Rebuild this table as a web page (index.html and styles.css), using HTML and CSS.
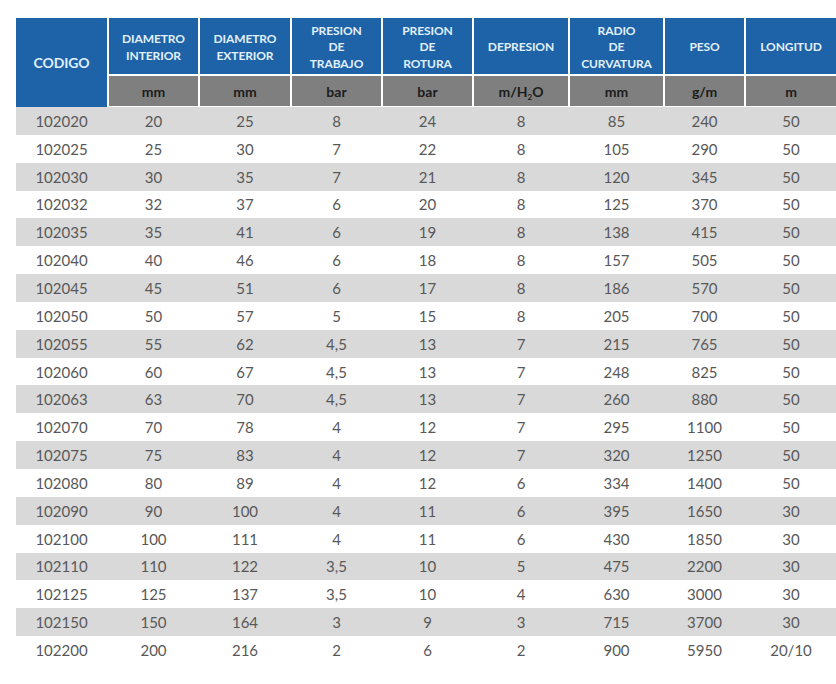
FILE: index.html
```html
<!DOCTYPE html>
<html lang="es">
<head>
<meta charset="utf-8">
<title>Tabla</title>
<link rel="stylesheet" href="styles.css">
</head>
<body>
<table class="spec">
  <colgroup>
    <col class="c1"><col class="c2"><col class="c3"><col class="c4"><col class="c5"><col class="c6"><col class="c7"><col class="c8"><col class="c9">
  </colgroup>
  <thead>
    <tr class="titles">
      <th rowspan="2" class="codigo">CODIGO</th>
      <th>DIAMETRO<br>INTERIOR</th>
      <th>DIAMETRO<br>EXTERIOR</th>
      <th>PRESION<br>DE<br>TRABAJO</th>
      <th>PRESION<br>DE<br>ROTURA</th>
      <th>DEPRESION</th>
      <th>RADIO<br>DE<br>CURVATURA</th>
      <th>PESO</th>
      <th>LONGITUD</th>
    </tr>
    <tr class="units">
      <th>mm</th><th>mm</th><th>bar</th><th>bar</th><th>m/H<sub>2</sub>O</th><th>mm</th><th>g/m</th><th>m</th>
    </tr>
  </thead>
  <tbody>
    <tr><td>102020</td><td>20</td><td>25</td><td>8</td><td>24</td><td>8</td><td>85</td><td>240</td><td>50</td></tr>
    <tr><td>102025</td><td>25</td><td>30</td><td>7</td><td>22</td><td>8</td><td>105</td><td>290</td><td>50</td></tr>
    <tr><td>102030</td><td>30</td><td>35</td><td>7</td><td>21</td><td>8</td><td>120</td><td>345</td><td>50</td></tr>
    <tr><td>102032</td><td>32</td><td>37</td><td>6</td><td>20</td><td>8</td><td>125</td><td>370</td><td>50</td></tr>
    <tr><td>102035</td><td>35</td><td>41</td><td>6</td><td>19</td><td>8</td><td>138</td><td>415</td><td>50</td></tr>
    <tr><td>102040</td><td>40</td><td>46</td><td>6</td><td>18</td><td>8</td><td>157</td><td>505</td><td>50</td></tr>
    <tr><td>102045</td><td>45</td><td>51</td><td>6</td><td>17</td><td>8</td><td>186</td><td>570</td><td>50</td></tr>
    <tr><td>102050</td><td>50</td><td>57</td><td>5</td><td>15</td><td>8</td><td>205</td><td>700</td><td>50</td></tr>
    <tr><td>102055</td><td>55</td><td>62</td><td>4,5</td><td>13</td><td>7</td><td>215</td><td>765</td><td>50</td></tr>
    <tr><td>102060</td><td>60</td><td>67</td><td>4,5</td><td>13</td><td>7</td><td>248</td><td>825</td><td>50</td></tr>
    <tr><td>102063</td><td>63</td><td>70</td><td>4,5</td><td>13</td><td>7</td><td>260</td><td>880</td><td>50</td></tr>
    <tr><td>102070</td><td>70</td><td>78</td><td>4</td><td>12</td><td>7</td><td>295</td><td>1100</td><td>50</td></tr>
    <tr><td>102075</td><td>75</td><td>83</td><td>4</td><td>12</td><td>7</td><td>320</td><td>1250</td><td>50</td></tr>
    <tr><td>102080</td><td>80</td><td>89</td><td>4</td><td>12</td><td>6</td><td>334</td><td>1400</td><td>50</td></tr>
    <tr><td>102090</td><td>90</td><td>100</td><td>4</td><td>11</td><td>6</td><td>395</td><td>1650</td><td>30</td></tr>
    <tr><td>102100</td><td>100</td><td>111</td><td>4</td><td>11</td><td>6</td><td>430</td><td>1850</td><td>30</td></tr>
    <tr><td>102110</td><td>110</td><td>122</td><td>3,5</td><td>10</td><td>5</td><td>475</td><td>2200</td><td>30</td></tr>
    <tr><td>102125</td><td>125</td><td>137</td><td>3,5</td><td>10</td><td>4</td><td>630</td><td>3000</td><td>30</td></tr>
    <tr><td>102150</td><td>150</td><td>164</td><td>3</td><td>9</td><td>3</td><td>715</td><td>3700</td><td>30</td></tr>
    <tr><td>102200</td><td>200</td><td>216</td><td>2</td><td>6</td><td>2</td><td>900</td><td>5950</td><td>20/10</td></tr>
  </tbody>
</table>
</body>
</html>
```

FILE: styles.css
```css
html, body {
  margin: 0;
  padding: 0;
  background: #ffffff;
}

body {
  padding: 18px 0 0 16px;
  font-family: Lato, "Open Sans", "Liberation Sans", sans-serif;
}

.spec {
  border-collapse: separate;
  border-spacing: 0;
  table-layout: fixed;
  width: 820px;
}

.c1 { width: 91px; }
.c2 { width: 91px; }
.c3 { width: 92px; }
.c4 { width: 91px; }
.c5 { width: 91px; }
.c6 { width: 96px; }
.c7 { width: 95px; }
.c8 { width: 81px; }
.c9 { width: 92px; }

.spec th,
.spec td {
  padding: 0;
  text-align: center;
  vertical-align: middle;
  box-sizing: border-box;
}

.titles th {
  height: 58px;
  padding-top: 3px;
  background: #1e62a7;
  color: #e0f0fc;
  font-size: 12px;
  font-weight: 700;
  line-height: 16.4px;
  border-left: 2px solid #ffffff;
  border-bottom: 2px solid #ffffff;
  letter-spacing: -0.1px;
}

.titles th.codigo {
  border-left: none;
  border-bottom: none;
  font-size: 14px;
  padding-top: 1px;
}

.units th {
  height: 31px;
  background: #7f7f7f;
  color: #1c1c1c;
  font-size: 14px;
  font-weight: 700;
  border-left: 2px solid #ffffff;
  border-bottom: 1px solid #ffffff;
}

.units sub {
  font-size: 8px;
  vertical-align: -3px;
  line-height: 0;
}

.spec tbody tr {
  height: 27.85px;
}

.spec tbody td {
  color: #585858;
  font-size: 15px;
  font-weight: 400;
  border-left: 2px solid transparent;
}

.spec tbody td:first-child {
  border-left: none;
}

.spec tbody tr:nth-child(odd) td {
  background: #d9d9d9;
}
```
